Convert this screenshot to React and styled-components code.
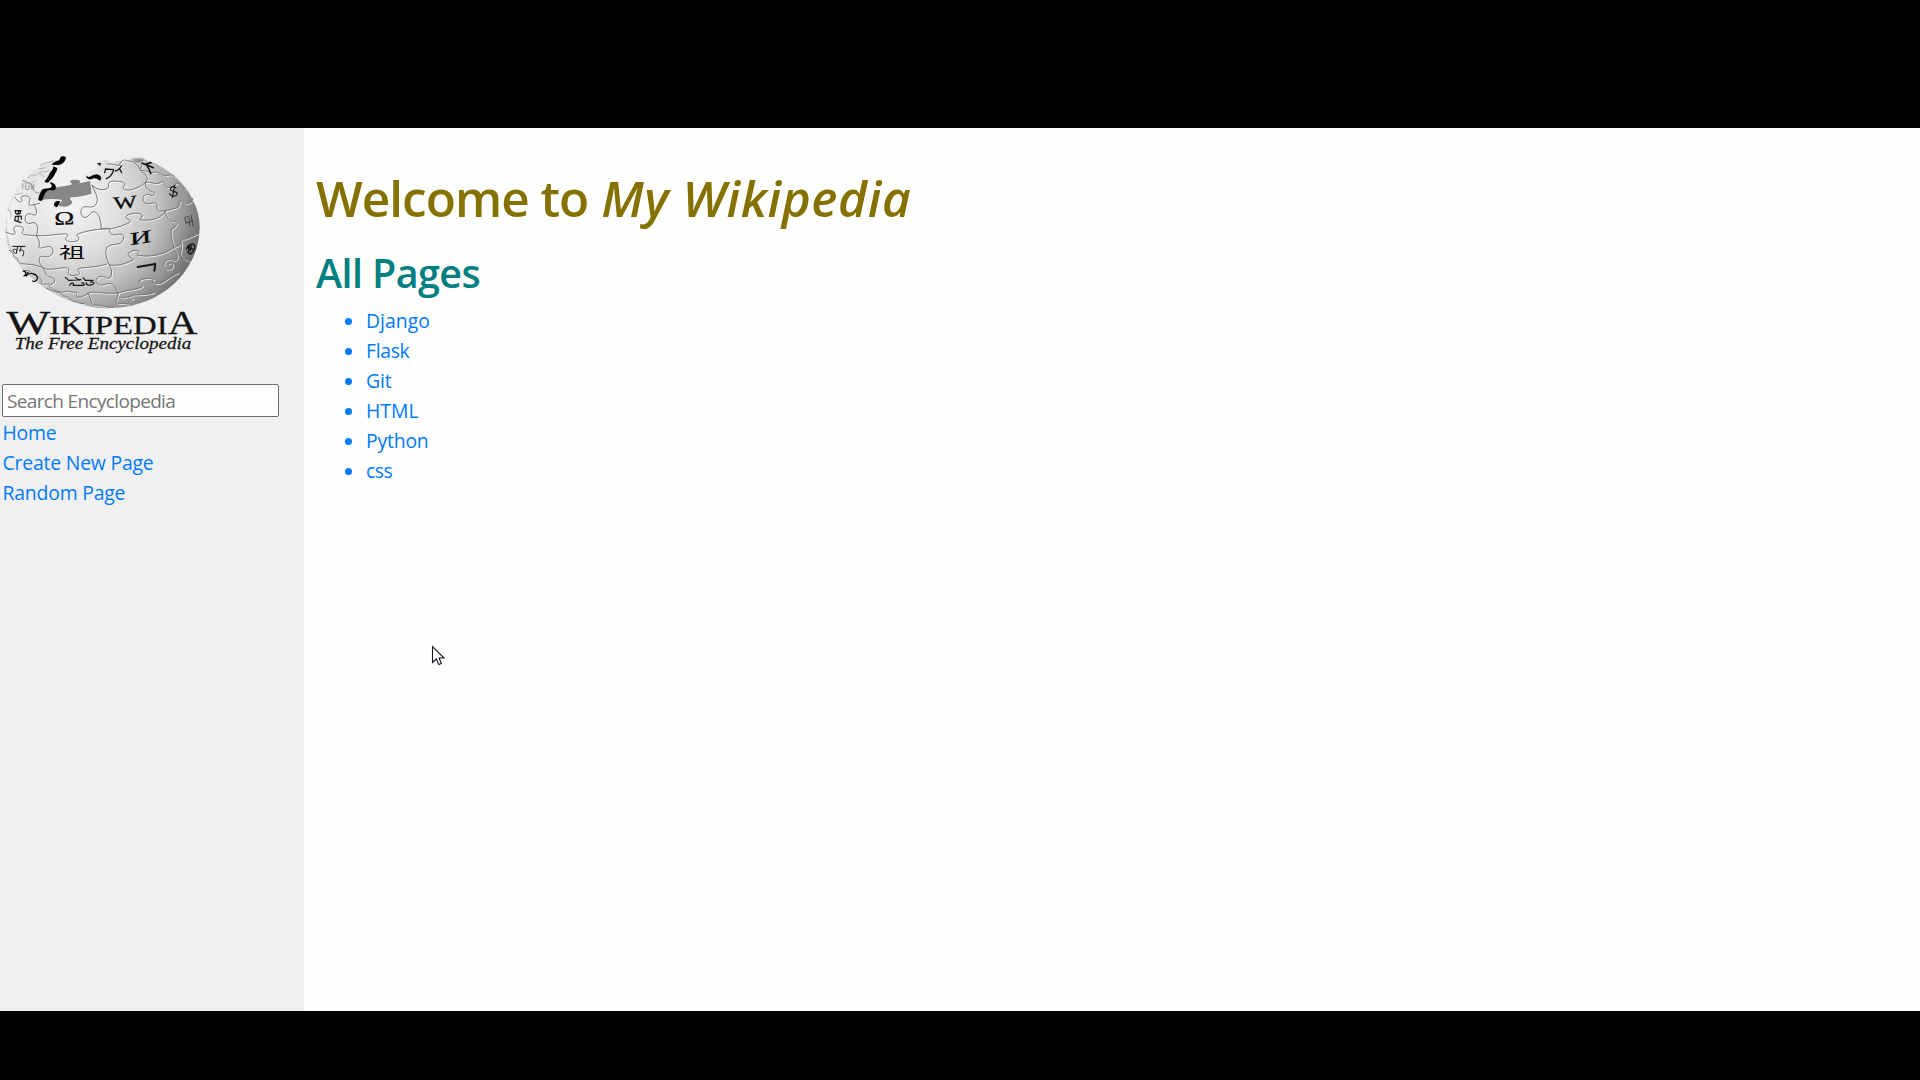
import React from 'react';
import styled, { createGlobalStyle, css } from 'styled-components';

const GlobalStyle = createGlobalStyle`
  * { box-sizing: border-box; }
  body {
    margin: 0;
    background: #000;
    font-family: "Open Sans", "Noto Sans", sans-serif;
    font-size: 20px;
    line-height: 30px;
    overflow: hidden;
  }
`;

const Screen = styled.div`
  height: 1080px;
  padding: 128px 0 69px;
  background: #000002;
`;

const Page = styled.div`
  display: grid;
  grid-template-columns: 304px 1fr;
  height: 883px;
  background: #fefefd;
`;

const Sidebar = styled.aside`
  padding: 22px 25px 0 2px;
  background: #f0f0f0;
`;

const Logo = styled.svg`
  display: block;
  width: 200px;
  height: 210px;
  margin-left: -2px;
`;

const SearchInput = styled.input`
  display: block;
  width: 277px;
  height: 33px;
  margin: 24px 0 1px;
  padding: 1px 4px 0;
  border: 1px solid #6c6c6c;
  border-radius: 2px;
  background: #fefefd;
  font: 400 19px/28px "Open Sans", sans-serif;
  letter-spacing: -0.65px;
  outline: none;
  &::placeholder { color: #757575; opacity: 1; }
`;

const linkStyle = css`
  color: #007bff;
  font-size: 19.4px;
  letter-spacing: ${(p) => p.$spacing || 0}px;
  text-decoration: none;
`;

const NavLink = styled.a`
  display: block;
  height: 30px;
  padding-left: 0.5px;
  white-space: nowrap;
  ${linkStyle}
`;

const Content = styled.main`
  padding: 40px 12px;
`;

const Title = styled.h1`
  margin: 0 0 10px;
  color: #857100;
  font-size: 49.5px;
  font-weight: 600;
  line-height: 60px;
  letter-spacing: ${(p) => p.$spacing}px;
  white-space: nowrap;
  em {
    margin-left: 1px;
    letter-spacing: ${(p) => p.$emSpacing}px;
  }
`;

const Subtitle = styled.h2`
  margin: 0 0 10px;
  padding-top: 12px;
  color: #008080;
  font-size: 39.5px;
  font-weight: 600;
  line-height: 46px;
  letter-spacing: ${(p) => p.$spacing}px;
`;

const PageList = styled.ul`
  margin: 0;
  padding: 0 0 0 29px;
  list-style: none;
`;

const PageItem = styled.li`
  display: flex;
  align-items: center;
  gap: 14px;
  height: 30px;
  &::before {
    content: "";
    width: 7px;
    height: 7px;
    border-radius: 50%;
    background: #007bff;
  }
`;

const PageLink = styled.a`
  ${linkStyle}
`;

const Pointer = styled.svg`
  position: absolute;
  left: 431px;
  top: 645px;
  width: 15px;
  height: 22px;
`;

const seams = [
  'M45 232 C58 254 72 246 64 235 C60 226 85 224 90 234 C92 246 78 254 94 256 L118 250',
  'M101 252 C112 268 112 283 105 286 C92 281 76 277 76 293 C73 310 86 314 100 307 C115 311 116 330 109 347',
  'M18 337 C39 344 48 345 45 337 C36 322 45 315 59 319 C77 322 69 331 66 337 C68 348 91 344 109 347',
  'M109 347 C145 348 163 343 185 342 C207 340 207 345 200 351 C190 360 205 366 220 365 C241 363 239 353 229 346 C232 339 272 330 304 327',
  'M109 347 C118 360 120 370 116 382 C121 388 140 377 151 380 C163 386 161 405 147 409 C135 413 119 404 118 415 C116 430 125 438 130 445',
  'M28 391 C45 399 38 410 46 413 C59 413 48 425 64 431 C83 433 104 432 130 444 C150 453 166 444 196 443 C221 445 190 464 216 466 C247 468 238 456 233 449 C240 439 279 446 320 432',
  'M130 444 C139 461 137 468 150 471 C171 475 166 492 151 493 C141 497 154 505 169 513',
  'M76 452 C89 449 94 460 103 466 C114 463 121 480 127 483 C117 492 131 494 145 492',
  'M276 196 C288 222 297 237 289 251 C283 265 269 260 255 260 C240 262 238 286 252 292 C267 294 266 279 281 275 C299 276 303 307 304 327',
  'M304 327 C338 330 369 317 387 308 C402 301 370 296 379 287 C393 278 424 276 428 288 C423 297 411 300 427 300 C456 303 488 293 496 273',
  'M277 197 C297 216 325 210 326 199 C323 184 335 181 351 184 C370 185 382 188 369 201 C367 217 410 212 437 187',
  'M437 187 C433 203 447 213 460 216 C468 224 462 230 447 224 C431 220 425 233 431 245 C441 258 455 247 467 249 C476 254 466 268 476 273 L496 273',
  'M437 187 C446 176 440 163 425 155 C415 148 430 137 426 128',
  'M322 132 C341 130 348 139 358 135 C363 122 371 116 383 123 C398 123 412 130 423 151 C438 151 442 157 459 158 C471 150 482 165 497 168 C508 163 515 163 524 169',
  'M437 187 C456 185 460 193 476 190 C488 180 495 188 496 197 C502 206 522 203 529 190 C536 185 546 205 554 208',
  'M496 273 C520 264 538 267 537 252 C536 241 545 240 552 247 C558 257 577 246 579 235',
  'M496 273 C498 286 504 301 518 304 C535 302 532 320 516 326 C507 342 521 374 521 382',
  'M521 382 C535 377 543 376 542 363 C545 352 555 359 560 356 C570 349 584 347 593 341',
  'M304 327 C321 325 325 322 329 329 C328 344 341 346 351 344 C370 337 378 350 366 364 C363 378 338 367 322 381 C312 395 319 416 329 435',
  'M329 435 C361 439 380 428 398 421 C408 418 384 413 384 401 C393 391 411 388 418 394 C414 403 402 406 423 407 C454 411 495 403 521 382',
  'M521 382 C526 398 541 411 526 421 C513 420 500 413 492 428 C487 446 505 453 515 444 C523 430 516 425 505 431',
  'M329 435 C338 456 337 475 322 475 C306 464 290 470 288 481 C288 494 306 499 321 491 C341 488 344 497 355 519',
  'M355 519 C371 510 406 511 426 500 C433 495 410 490 420 480 C432 474 451 474 462 478 C460 486 448 485 471 491 C488 492 513 465 534 458',
  'M169 513 C195 522 195 509 216 516 C231 519 232 513 229 524 C228 539 252 529 270 517 C290 514 326 523 355 519',
  'M140 505 C164 520 176 511 193 528 C212 531 206 540 223 545 C236 543 235 552 253 551',
  'M263 520 C277 536 269 550 283 555 C309 554 318 566 341 561',
  'M355 519 C349 533 353 540 346 544 C348 554 372 548 383 552 M358 532 C372 538 379 528 395 529 C406 537 394 542 386 532 C396 518 430 530 463 517',
  'M542 363 C552 386 531 400 550 415 L568 424',
  'M69 181 C82 192 93 184 98 201 C103 217 110 219 117 219',
];

const WikiLogo = () => (
  <Logo viewBox="0 90 600 630" aria-label="Wikipedia, The Free Encyclopedia">
    <defs>
      <radialGradient id="globe" gradientUnits="userSpaceOnUse" cx="205" cy="245" r="400">
        <stop offset="0" stopColor="#f6f6f6" />
        <stop offset="0.38" stopColor="#e0e0e0" />
        <stop offset="0.68" stopColor="#c0c0c0" />
        <stop offset="0.88" stopColor="#969696" />
        <stop offset="1" stopColor="#747474" />
      </radialGradient>
      <linearGradient id="leftLight" x1="0" x2="1">
        <stop offset="0" stopColor="#fff" stopOpacity="0.75" />
        <stop offset="0.35" stopColor="#fff" stopOpacity="0" />
      </linearGradient>
    </defs>
    <path
      d="M196 112 L188 111 L181 119 L162 119 C145 124 136 128 122 135 L116 146 C104 149 99 158 89 163 L81 174 L65 184 L63 196 C52 200 49 210 48 219 L36 232 L31 250 L23 267 L24 288 L17 304 L20 321 L14 331 L20 346 L20 365 L29 386 L39 409 L55 429 L68 448 C91 472 113 491 140 507 C193 540 257 566 326 565 C399 562 452 544 501 509 C559 465 598 401 599 323 C600 271 573 211 524 169 C505 154 483 139 464 129 L442 122 L431 113 L396 113 L382 122 L355 124 L326 130 L324 120 L306 121 L305 130 L290 132 L292 146 L275 150 L260 165 L278 170 L302 177 L274 188 L276 231 L238 243 L202 258 L178 258 L164 240 L130 237 L119 242 L123 207 L149 188 L139 185 L149 157 L164 143 L155 135 L181 133 L196 122 Z"
      fill="url(#globe)"
    />
    <path d="M181 119 C120 128 48 190 24 280 C10 359 47 425 91 470 L210 470 L247 250 L125 236 L145 180 L164 137 Z" fill="url(#leftLight)" />
    <path d="M160 203 L192 199 L214 194 C220 189 209 189 210 183 C219 177 235 179 240 182 C242 190 233 189 239 190 L271 183 C270 195 275 208 274 221 C253 229 233 230 213 232 C204 239 219 241 216 249 C208 260 194 262 177 258 C173 249 187 247 186 239 C168 237 146 236 124 240 C128 225 137 208 160 203 Z" fill="#868686" />
    <g fill="none" strokeLinecap="round" strokeLinejoin="round">
      <g stroke="#fff" strokeOpacity="0.75" strokeWidth="3" transform="translate(3 3)">
        {seams.map((d) => <path key={d} d={d} />)}
      </g>
      <g stroke="#787878" strokeWidth="3">
        {seams.map((d) => <path key={d} d={d} />)}
      </g>
      <path d="M120 136 C138 121 154 134 160 120 M116 147 L137 143 M83 174 C96 159 111 171 119 157 C126 150 139 162 146 151 M119 158 L133 171 M65 194 C79 185 94 196 106 182 M46 224 L67 219 M24 268 L34 276 L32 293" stroke="#aaa" strokeWidth="2.5" />
    </g>
    <path d="M155 134 C160 128 164 123 174 122 C182 121 177 112 186 109 C194 107 200 111 197 118 C194 127 186 133 176 135 C168 136 162 134 155 134 Z" fill="#050505" />
    <path d="M160 139 L172 144 C172 153 166 157 163 166 C158 174 151 182 144 188 L133 186 C138 178 145 171 149 160 C153 153 160 150 160 139 Z" fill="#050505" />
    <path d="M149 188 C157 185 168 193 168 203 C166 213 158 211 151 210 C143 208 138 216 134 222 C130 229 130 237 125 243 L115 241 C115 229 120 220 125 210 C133 203 143 209 154 202 C158 197 153 193 149 188 Z" fill="#050505" />
    <path d="M162 257 C161 247 169 240 181 244 C176 249 178 257 170 262 Z" fill="#050505" />
    <path d="M258 166 C268 179 275 163 290 163 C303 165 308 176 300 182 C291 177 285 172 276 177 C268 181 258 176 258 166 Z" fill="#050505" />
    <path d="M290 130 L303 128 L301 138 Z" fill="#111" />
    <path d="M400 119 C411 113 433 115 431 121 C424 130 405 130 400 119 Z" fill="#929292" />

    <g fill="#080808" fontFamily="Liberation Serif, serif">
      <text x="163" y="314" fontSize="57" textLength="60" lengthAdjust="spacingAndGlyphs" fontWeight="400" stroke="#080808" strokeWidth="0.8" transform="rotate(-2 190 300)">Ω</text>
      <text x="339" y="265" fontSize="53" textLength="71" lengthAdjust="spacingAndGlyphs" fontWeight="400" stroke="#080808" strokeWidth="0.8" transform="rotate(-5 375 245)">W</text>
      <text x="389" y="371" fontSize="53" textLength="65" lengthAdjust="spacingAndGlyphs" fontWeight="400" stroke="#080808" strokeWidth="0.8" transform="rotate(-9 420 352) skewX(-8) translate(50 0)">И</text>
      <text x="177" y="413" fontFamily="Noto Sans CJK JP, sans-serif" fontSize="43" textLength="78" lengthAdjust="spacingAndGlyphs" fontWeight="400">祖</text>
    </g>
    <g fill="none" stroke="#151515" strokeWidth="4" strokeLinejoin="round" strokeLinecap="round">
      <path d="M317 146 L314 158 M317 147 L341 149 C338 162 331 171 319 176 M364 137 C359 148 353 151 346 153 M359 147 L365 158" />
      <path d="M427 130 L445 137 L460 143 M441 137 C446 145 450 152 452 160 M436 133 L453 128" strokeWidth="5" />
      <path d="M528 203 C517 196 508 204 513 211 C520 217 534 213 532 223 C527 232 513 229 509 221 M524 197 L517 232" strokeWidth="3.5" />
      <path d="M413 441 L466 432 L463 452" strokeWidth="6" />
      <path d="M196 472 L206 481 L243 479 M226 472 L237 481 M249 473 L256 481 L279 481 M209 496 C214 486 225 489 219 496 L249 496 C257 496 251 488 245 489 M259 488 C256 496 270 497 279 493 C286 489 278 483 271 487" strokeWidth="3.5" />
      <path d="M45 272 L63 272 M47 273 C43 281 54 286 61 279 C64 270 54 272 54 281 M46 289 L64 288 M46 291 L44 301 L63 308 M55 290 L54 304 M64 289 L64 298" strokeWidth="3.5" />
      <path d="M38 379 L75 379 M53 380 L49 400 M50 390 C38 382 34 394 46 400 M64 379 L59 393 M59 392 C70 385 76 396 68 408" strokeWidth="3" />
      <path d="M70 453 C80 454 79 464 72 468 M84 457 L78 468 C93 451 113 466 112 476 C109 484 103 486 98 483" strokeWidth="4" />
      <path d="M70 196 L67 207 M78 194 L76 208 L85 209 L89 194 M94 196 L94 208 L102 205 L101 193" stroke="#999" strokeWidth="3" />
      <path d="M557 302 C549 289 563 284 568 296 C574 308 557 314 557 302 M573 285 L580 319 M556 309 L580 302 M568 308 L569 318" stroke="#444" strokeWidth="3" />
      <path d="M559 387 C566 370 586 366 585 383 C578 403 570 403 567 399 M564 382 L580 388 M569 374 L564 397 M574 378 L570 393" strokeWidth="4" />
    </g>
    <g fill="#141414" stroke="#141414" strokeWidth="0.8" fontFamily="Liberation Serif, serif">
      <text x="19" y="641" fontSize="104" textLength="132" lengthAdjust="spacingAndGlyphs">W</text>
      <text x="148" y="641" fontSize="74" textLength="355" lengthAdjust="spacingAndGlyphs">IKIPEDI</text>
      <text x="503" y="641" fontSize="104" textLength="89" lengthAdjust="spacingAndGlyphs">A</text>
      <text x="44" y="688" fontSize="51" fontStyle="italic" textLength="530" lengthAdjust="spacingAndGlyphs">The Free Encyclopedia</text>
    </g>
  </Logo>
);

const navigation = [
  { label: 'Home', spacing: -0.2 },
  { label: 'Create New Page', spacing: -0.2 },
  { label: 'Random Page', spacing: -0.2 },
];

const pages = [
  { label: 'Django', spacing: 0 },
  { label: 'Flask', spacing: -0.35 },
  { label: 'Git', spacing: -0.1 },
  { label: 'HTML', spacing: 0 },
  { label: 'Python', spacing: -0.2 },
  { label: 'css', spacing: -0.5 },
];

export default function App() {
  return (
    <Screen>
      <GlobalStyle />
      <Page>
        <Sidebar>
          <WikiLogo />
          <SearchInput placeholder="Search Encyclopedia" />
          {navigation.map((n) => (
            <NavLink key={n.label} $spacing={n.spacing}>{n.label}</NavLink>
          ))}
        </Sidebar>
        <Content>
          <Title $spacing={-1} $emSpacing={0.62}>Welcome to <em>My Wikipedia</em></Title>
          <Subtitle $spacing={-0.6}>All Pages</Subtitle>
          <PageList>
            {pages.map((p) => (
              <PageItem key={p.label}><PageLink $spacing={p.spacing}>{p.label}</PageLink></PageItem>
            ))}
          </PageList>
        </Content>
      </Page>
      <Pointer viewBox="0 0 15 22">
        <path d="M1.5 1.5 V17.5 L5.3 14 L7.8 19.6 L10.4 18.5 L8 13 H13 Z" fill="#fff" stroke="#15151f" strokeWidth="1.1" />
      </Pointer>
    </Screen>
  );
}
